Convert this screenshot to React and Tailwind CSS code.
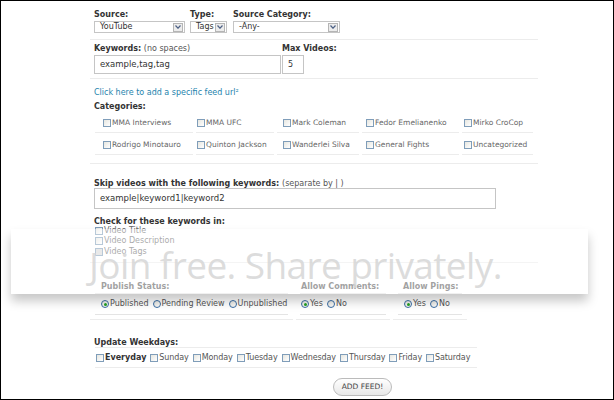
import React from 'react';

const Check = ({ shade }) => (
  <span
    className={`inline-block w-[8px] h-[8px] border border-[#7f9db9] shrink-0 ${
      shade ? 'bg-[#d8d8d8]' : 'bg-gradient-to-br from-[#e6e6e0] to-white'
    }`}
  />
);

const Radio = ({ on }) => (
  <span className="inline-flex items-center justify-center w-[8px] h-[8px] rounded-full border border-[#3a6ea5] bg-gradient-to-br from-[#e6e6e0] to-white shrink-0">
    {on && <span className="w-[3px] h-[3px] rounded-full bg-[#21a121]" />}
  </span>
);

const Select = ({ value, width }) => (
  <div
    className="flex items-center justify-between h-[12px] border border-[#c5c5c5] bg-white pl-[5px] pr-[1px]"
    style={{ width }}
  >
    <span className="text-[8px] leading-[10px] text-[#333]">{value}</span>
    <span className="flex items-center justify-center w-[10px] h-[9px] border border-[#b5b5b5] bg-[#ececec]">
      <svg width="6" height="4" viewBox="0 0 6 4">
        <path d="M0.5 0.5 L3 3.2 L5.5 0.5" fill="none" stroke="#4d6185" strokeWidth="1.2" />
      </svg>
    </span>
  </div>
);

const Label = ({ children, note }) => (
  <div className="h-[10px] leading-[10px] text-[8px] font-bold text-[#333] whitespace-nowrap">
    {children}
    {note && <span className="font-normal text-[#555]"> {note}</span>}
  </div>
);

const categoryCells = [
  { w: 98, pl: 8, items: ['MMA Interviews', 'Rodrigo Minotauro'] },
  { w: 78, pl: 1, items: ['MMA UFC', 'Quinton Jackson'] },
  { w: 82, pl: 6, items: ['Mark Coleman', 'Wanderlei Silva'] },
  { w: 97, pl: 4, items: ['Fedor Emelianenko', 'General Fights'] },
  { w: 71, pl: 2, items: ['Mirko CroCop', 'Uncategorized'] },
];

const weekdays = ['Sunday', 'Monday', 'Tuesday', 'Wednesday', 'Thursday', 'Friday', 'Saturday'];

export default function App() {
  return (
    <div className="relative w-[614px] h-[400px] overflow-hidden border border-black bg-white font-['DejaVu_Sans',Verdana,sans-serif] text-[#555]">
      <div className="ml-[89px] w-[448px]">
        {/* source row */}
        <div className="h-[39px] border-b border-[#ececec] pt-[9px] pl-[4px]">
          <div className="flex">
            <div className="w-[96px]">
              <Label>Source:</Label>
              <div className="mt-[1px]">
                <Select value="YouTube" width={91} />
              </div>
            </div>
            <div className="w-[43px]">
              <Label>Type:</Label>
              <div className="mt-[1px]">
                <Select value="Tags" width={37} />
              </div>
            </div>
            <div>
              <Label>Source Category:</Label>
              <div className="mt-[1px]">
                <Select value="-Any-" width={107} />
              </div>
            </div>
          </div>
        </div>

        {/* keywords row */}
        <div className="h-[39px] border-b border-[#ececec] pt-[4px] pl-[4px]">
          <div className="flex">
            <div className="w-[188px]">
              <Label note="(no spaces)">Keywords:</Label>
              <div className="mt-[1px] h-[19px] w-[187px] border border-[#c5c5c5] flex items-center pl-[5px] text-[8.5px] text-[#333]">
                example,tag,tag
              </div>
            </div>
            <div>
              <Label>Max Videos:</Label>
              <div className="mt-[1px] h-[19px] w-[22px] border border-[#c5c5c5] flex items-center pl-[5px] text-[8px] text-[#333]">
                5
              </div>
            </div>
          </div>
        </div>

        {/* categories */}
        <div className="h-[85px] border-b border-[#ececec] pt-[9px] pl-[4px]">
          <div className="h-[10px] leading-[10px] text-[8px] text-[#2583ad]">
            Click here to add a specific feed url²
          </div>
          <div className="mt-[4px]">
            <Label>Categories:</Label>
          </div>
          <div className="mt-[1px] ml-[1px] flex gap-[3px]">
            {categoryCells.map((cell) => (
              <div key={cell.w + cell.items[0]} className="flex flex-col gap-[2px]" style={{ width: cell.w }}>
                {cell.items.map((item) => (
                  <div
                    key={item}
                    className="h-[20px] border-b border-[#ececec] flex items-center gap-[1px] text-[7.5px] text-[#666] whitespace-nowrap"
                    style={{ paddingLeft: cell.pl }}
                  >
                    <Check />
                    <span>{item}</span>
                  </div>
                ))}
              </div>
            ))}
          </div>
        </div>

        {/* skip keywords */}
        <div className="h-[99px] border-b border-[#ececec] pt-[15px] pl-[4px]">
          <div className="h-[9px] leading-[9px] text-[8px] font-bold text-[#333] whitespace-nowrap">
            Skip videos with the following keywords: <span className="font-normal text-[#555]">(separate by | )</span>
          </div>
          <div className="h-[21px] w-[402px] border border-[#c5c5c5] flex items-center pl-[5px] text-[8.5px] text-[#333]">
            example|keyword1|keyword2
          </div>
          <div className="mt-[8px] h-[9px] leading-[9px] text-[8px] font-bold text-[#333]">
            Check for these keywords in:
          </div>
          <div className="ml-[1px] flex flex-col text-[8px] text-[#666]">
            <div className="h-[10px] flex items-center gap-[1px]"><Check /><span>Video Title</span></div>
            <div className="h-[10px] flex items-center gap-[1px]"><Check /><span>Video Description</span></div>
            <div className="h-[11px] flex items-center gap-[1px]"><Check shade /><span>Video Tags</span></div>
          </div>
        </div>

        {/* publish options */}
        <div className="flex gap-[3px] pt-[18px]">
          <div className="w-[203px] border-b border-[#ececec] px-[5px] pb-[4px]">
            <div className="h-[13px] border-b border-[#e4e4e4] pl-[6px] text-[8px] leading-[11px] font-bold text-[#555]">Publish Status:</div>
            <div className="h-[21px] border-b border-[#e4e4e4] pl-[6px] flex items-center text-[8px] text-[#555] whitespace-nowrap">
              <Radio on /><span className="ml-[1px] mr-[4px]">Published</span>
              <Radio /><span className="ml-[1px] mr-[4px]">Pending Review</span>
              <Radio /><span className="ml-[1px]">Unpublished</span>
            </div>
          </div>
          <div className="w-[94px] border-b border-[#ececec] px-[4px] pb-[4px]">
            <div className="h-[13px] border-b border-[#e4e4e4] pl-[1px] text-[8px] leading-[11px] font-bold text-[#555] whitespace-nowrap">Allow Comments:</div>
            <div className="h-[21px] border-b border-[#e4e4e4] pl-[1px] flex items-center text-[8px] text-[#555]">
              <Radio on /><span className="ml-[1px] mr-[4px]">Yes</span>
              <Radio /><span className="ml-[1px]">No</span>
            </div>
          </div>
          <div className="w-[74px] border-b border-[#ececec] px-[5px] pb-[4px]">
            <div className="h-[13px] border-b border-[#e4e4e4] pl-[5px] text-[8px] leading-[11px] font-bold text-[#555] whitespace-nowrap">Allow Pings:</div>
            <div className="h-[21px] border-b border-[#e4e4e4] pl-[6px] flex items-center text-[8px] text-[#555]">
              <Radio on /><span className="ml-[1px] mr-[4px]">Yes</span>
              <Radio /><span className="ml-[1px]">No</span>
            </div>
          </div>
        </div>

        {/* weekdays */}
        <div className="mt-[18px] pl-[4px]">
          <div className="h-[9px] leading-[9px] text-[8px] font-bold text-[#333]">Update Weekdays:</div>
          <div className="ml-[1px] w-[382px] h-[21px] border-y border-[#ececec] flex items-center pl-[1px] text-[8px] text-[#555] whitespace-nowrap">
            <Check /><span className="ml-[1px] mr-[4px] font-bold text-[#333]">Everyday</span>
            {weekdays.map((d) => (
              <React.Fragment key={d}>
                <Check /><span className="ml-[1px] mr-[4px] tracking-[-0.1px]">{d}</span>
              </React.Fragment>
            ))}
          </div>
        </div>

        <div className="mt-[10px] ml-[243px] w-[59px] h-[18px] rounded-full border border-[#bbb] bg-gradient-to-b from-white to-[#e8e8e8] flex items-center justify-center text-[7.5px] text-[#444]">
          ADD FEED!
        </div>
      </div>

      {/* photobucket watermark */}
      <div className="absolute left-[10px] top-[228px] w-[577px] h-[65px] bg-white/45 shadow-[0_7px_10px_rgba(0,0,0,0.22)]">
        <div className="absolute left-[78px] top-[24px] text-[37px] leading-[24px] text-[#d6d6d6]/85 font-['Open_Sans',sans-serif] tracking-[-0.6px] whitespace-nowrap">
          Join free. Share privately.
        </div>
      </div>
    </div>
  );
}
